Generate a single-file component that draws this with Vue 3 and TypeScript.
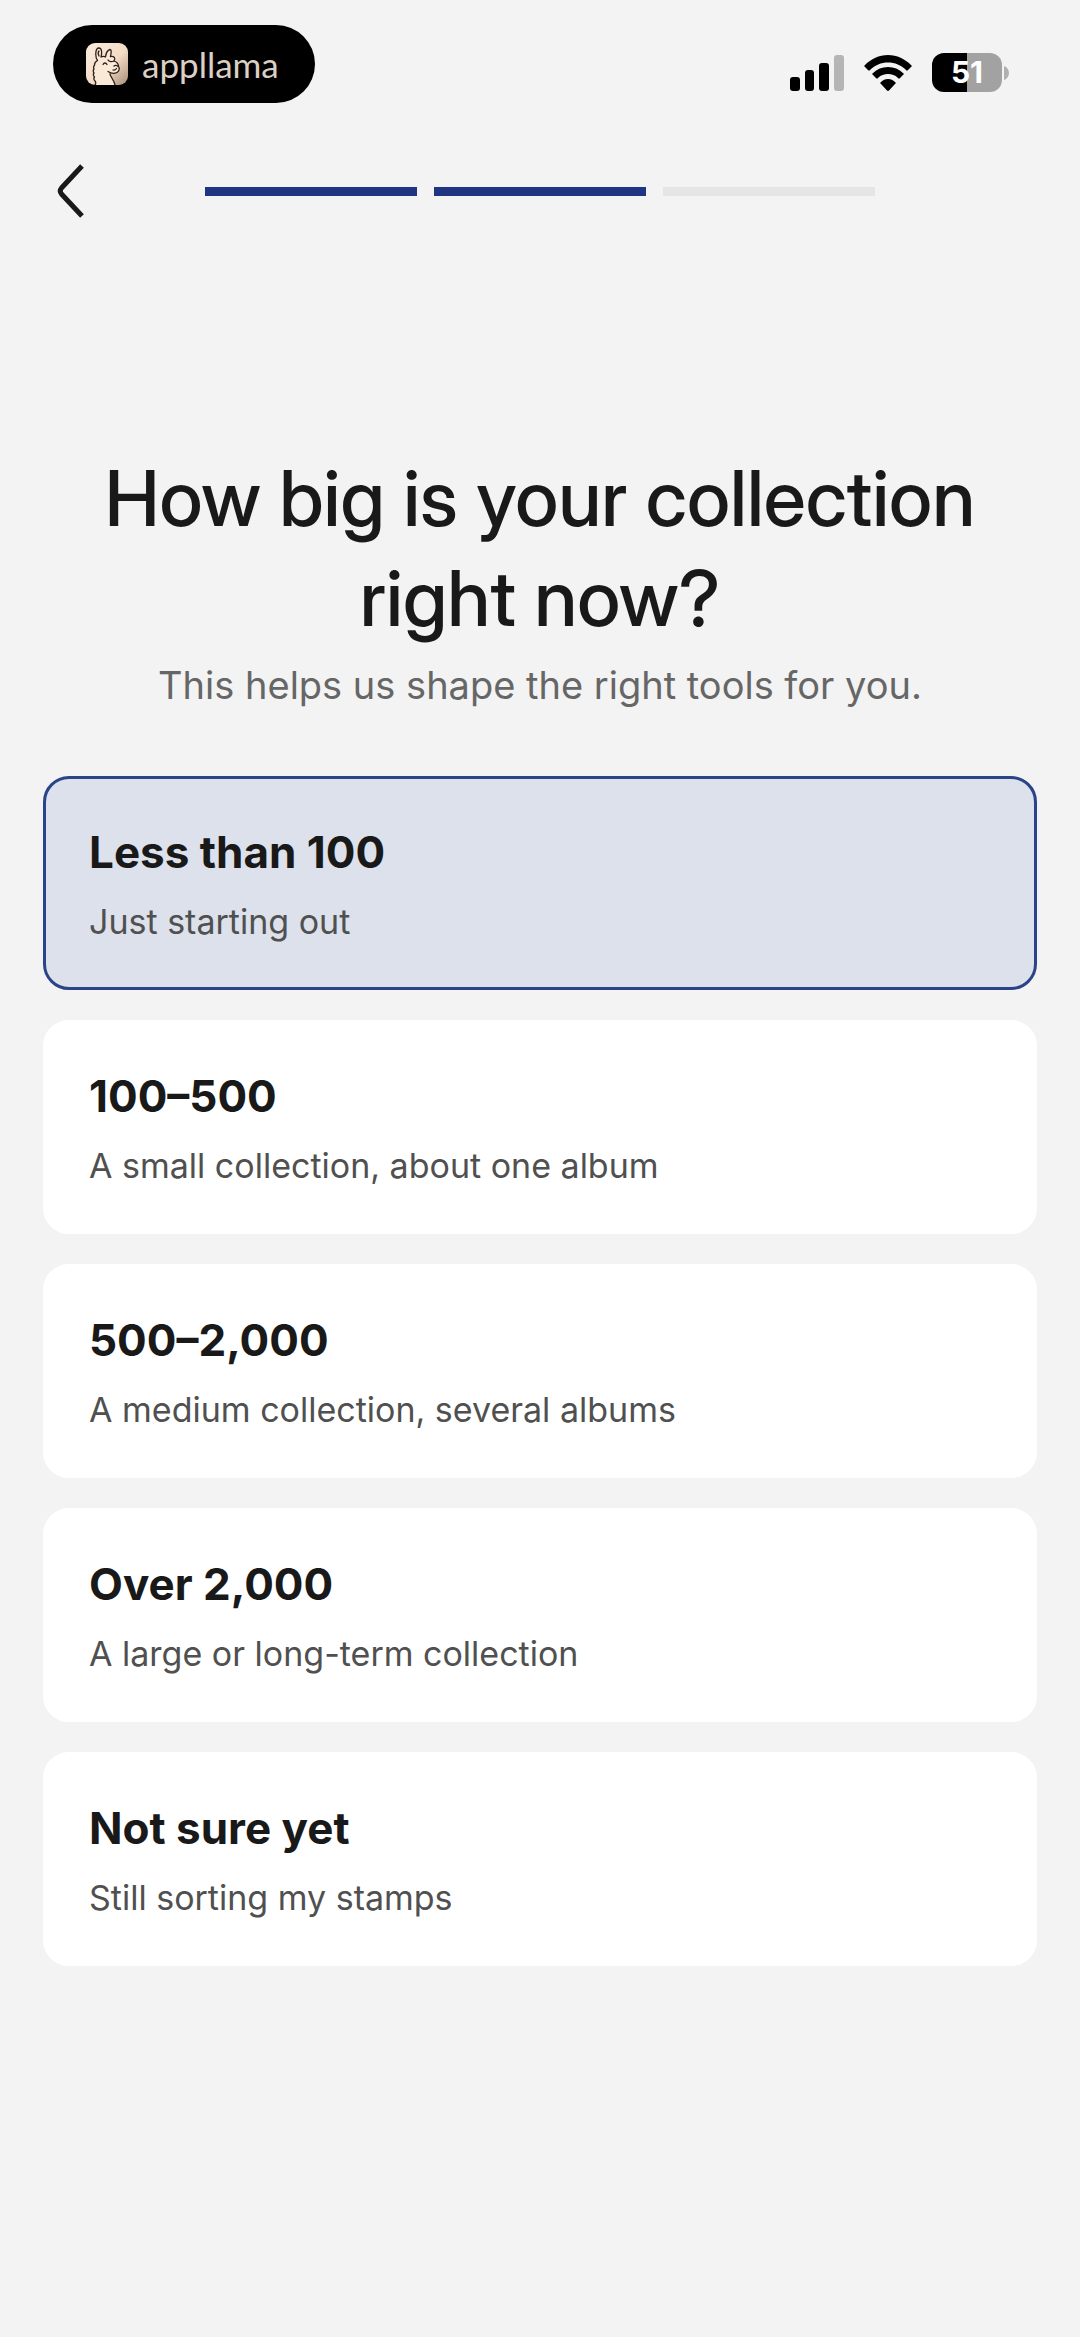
<script setup lang="ts">
import { ref } from 'vue'

interface SizeOption {
  id: string
  title: string
  note: string
}

const options: SizeOption[] = [
  { id: 'under-100', title: 'Less than 100', note: 'Just starting out' },
  { id: '100-500', title: '100–500', note: 'A small collection, about one album' },
  { id: '500-2000', title: '500–2,000', note: 'A medium collection, several albums' },
  { id: 'over-2000', title: 'Over 2,000', note: 'A large or long-term collection' },
  { id: 'not-sure', title: 'Not sure yet', note: 'Still sorting my stamps' },
]

const selected = ref<string>('under-100')
const totalSteps = 3
const currentStep = 2
</script>

<template>
  <div class="screen">
    <div class="status">
      <div class="island">
        <svg class="llama" viewBox="0 0 42 42" aria-hidden="true">
          <defs>
            <linearGradient id="tile" x1="0" y1="0" x2="1" y2="1">
              <stop offset="0" stop-color="#f9ecdf" />
              <stop offset="0.55" stop-color="#f5dcc6" />
              <stop offset="1" stop-color="#a88f7b" />
            </linearGradient>
          </defs>
          <rect width="42" height="42" rx="9" fill="url(#tile)" />
          <path
            d="M9 42q1.500-2 0-4-2-2-.5-4-2-2-.5-4-1.500-2 0-4-1-2 .5-4 0-3 3-4.500C9 14 9 5 13 5c3 0 3 5 2 9 2-1 3-1 4.500 0C20 10 22 7 24 6.500c2 0 1 4 .5 7C28 13 30 15 28 18c3 1 4.500 3 4.500 5.500 1.500 2 .5 5-1.500 6-2 1-4 1-6 .5 0 4 4 6 4 12z"
            fill="#fbe9d8"
          />
          <g fill="none" stroke="#2d2119" stroke-width="1.300" stroke-linecap="round" stroke-linejoin="round">
            <path d="M9 42q1.500-2 0-4-2-2-.5-4-2-2-.5-4-1.500-2 0-4-1-2 .5-4 0-3 3-4.500C9 14 9 5 13 5c3 0 3 5 2 9 2-1 3-1 4.500 0C20 10 22 7 24 6.500c2 0 1 4 .5 7" />
            <path d="M13 13c-1-2-1-4 0-5" />
            <path d="M24.500 13.500C28 13 30 15 28 18c-2 1-5 1-6-1" />
            <path d="M28 18c3 1 4.500 3 4.500 5.500 1.500 2 .5 5-1.500 6-2 1-6 1-9-1M28 23c1-1 3-1 4 .5M30.500 25.500c-1 1.500-2 2-3.500 1.500M17 21.500c1-2 3-2 4 0M24 31c1 4 4 6 5 11" />
          </g>
        </svg>
        <span class="wordmark">appllama</span>
      </div>

      <div class="indicators">
        <svg class="signal" viewBox="0 0 54 36" aria-hidden="true">
          <rect x="0" y="22" width="10" height="14" rx="3" />
          <rect x="15" y="15" width="9" height="21" rx="3" />
          <rect x="29" y="8" width="10" height="28" rx="3" />
          <rect x="44" y="0" width="10" height="36" rx="3" fill="#b5b5b5" />
        </svg>
        <svg class="wifi" viewBox="0 0 48 36" aria-hidden="true">
          <path d="M24 0C15 0 7 4 1 10c-1 1-1 1 0 2l3 3c1 1 1 1 2 0C11 10 17 7.500 24 7.500S37 10 42 15c1 1 1 1 2 0l3-3c1-1 1-1 0-2C41 4 33 0 24 0z" />
          <path d="M24 12c-6 0-11 2-15 6-1 1-1 1 0 2l3 3c1 1 1 1 2 0 3-3 6-4 10-4s7 1 10 4c1 1 1 1 2 0l3-3c1-1 1-1 0-2-4-4-9-6-15-6z" />
          <path d="M24 24c-3 0-5 1-7 3-1 1-1 1 0 2l6 6.500c1 .7 1 .7 2 0l6-6.500c1-1 1-1 0-2-2-2-4-3-7-3z" />
        </svg>
        <div class="battery">
          <span class="cell">51</span>
          <svg class="nub" viewBox="0 0 5 14" aria-hidden="true">
            <path d="M0 0c3 1 5 4 5 7s-2 6-5 7z" fill="#b0b0b0" />
          </svg>
        </div>
      </div>
    </div>

    <header class="nav">
      <button class="back" type="button" aria-label="Back">
        <svg viewBox="0 0 30 56" aria-hidden="true">
          <path d="M25 3 4.500 25q-2.500 3 0 6L25 53" fill="none" stroke="#191919" stroke-width="5" />
        </svg>
      </button>
      <div class="steps" role="progressbar" :aria-valuenow="currentStep" aria-valuemin="0" :aria-valuemax="totalSteps">
        <span v-for="n in totalSteps" :key="n" class="step" :class="{ done: n <= currentStep }"></span>
      </div>
    </header>

    <main class="content">
      <h1>How big is your collection right now?</h1>
      <p class="lead">This helps us shape the right tools for you.</p>

      <form class="options">
        <label
          v-for="option in options"
          :key="option.id"
          class="card"
          :class="{ selected: option.id === selected }"
        >
          <input v-model="selected" class="radio" type="radio" name="size" :value="option.id" />
          <span class="card-title">{{ option.title }}</span>
          <span class="card-note">{{ option.note }}</span>
        </label>
      </form>
    </main>
  </div>
</template>

<style>
body {
  margin: 0;
  background: #f3f3f3;
}
</style>

<style scoped>
.screen {
  min-height: 100vh;
  box-sizing: border-box;
  background: #f3f3f3;
  color: #191919;
  font-family: Inter, "Liberation Sans", sans-serif;
}

.status {
  display: flex;
  justify-content: space-between;
  align-items: flex-end;
  padding: 25px 71px 0 53px;
}

.island {
  display: flex;
  align-items: center;
  gap: 14px;
  box-sizing: border-box;
  width: 262px;
  height: 78px;
  padding: 0 33px;
  border-radius: 39px;
  background: #000;
}

.llama {
  flex: none;
  width: 42px;
  height: 42px;
}

.wordmark {
  color: #dccfc3;
  font-family: Lato, sans-serif;
  font-size: 35px;
  font-weight: 400;
  line-height: 42px;
}

.indicators {
  display: flex;
  align-items: center;
  gap: 20px;
  margin-bottom: 11px;
}

.signal {
  width: 54px;
  height: 36px;
}

.wifi {
  width: 48px;
  height: 36px;
}

.battery {
  display: flex;
  align-items: center;
  gap: 2px;
}

.cell {
  width: 70px;
  border-radius: 12px;
  background: linear-gradient(90deg, #000 50%, #a2a2a2 50%);
  color: #fff;
  font-size: 30px;
  font-weight: 700;
  line-height: 39px;
  text-align: center;
}

.nub {
  width: 5px;
  height: 14px;
}

.nav {
  display: grid;
  grid-template-columns: 148px 1fr 148px;
  align-items: center;
  padding: 60px 57px 0;
}

.back {
  display: flex;
  width: 60px;
  height: 56px;
  padding: 0;
  border: 0;
  background: none;
}

.back svg {
  width: 30px;
  height: 56px;
}

.steps {
  display: flex;
  gap: 17px;
}

.step {
  flex: 1;
  height: 9px;
  background: #e5e5e5;
}

.step.done {
  background: #1f3582;
}

.content {
  padding: 229px 43px 60px;
}

h1 {
  margin: 0;
  font-family: "Inter Display", Inter, "Liberation Sans", sans-serif;
  font-size: 77px;
  font-weight: 500;
  line-height: 100px;
  text-align: center;
}

.lead {
  margin: 12px 0 0;
  color: #666;
  font-size: 38px;
  line-height: 50px;
  text-align: center;
}

.options {
  display: flex;
  flex-direction: column;
  gap: 30px;
  margin-top: 66px;
}

.card {
  position: relative;
  display: flex;
  flex-direction: column;
  gap: 22px;
  padding: 45px 43px;
  border: 3px solid #fff;
  border-radius: 26px;
  background: #fff;
}

.card.selected {
  border-color: #2a4487;
  background: #dce1eb;
}

.radio {
  position: absolute;
  inset: 0;
  width: 100%;
  height: 100%;
  margin: 0;
  opacity: 0;
}

.card-title {
  font-size: 44px;
  font-weight: 700;
  line-height: 56px;
}

.card-note {
  color: #505050;
  font-size: 34px;
  font-weight: 400;
  line-height: 40px;
}
</style>
